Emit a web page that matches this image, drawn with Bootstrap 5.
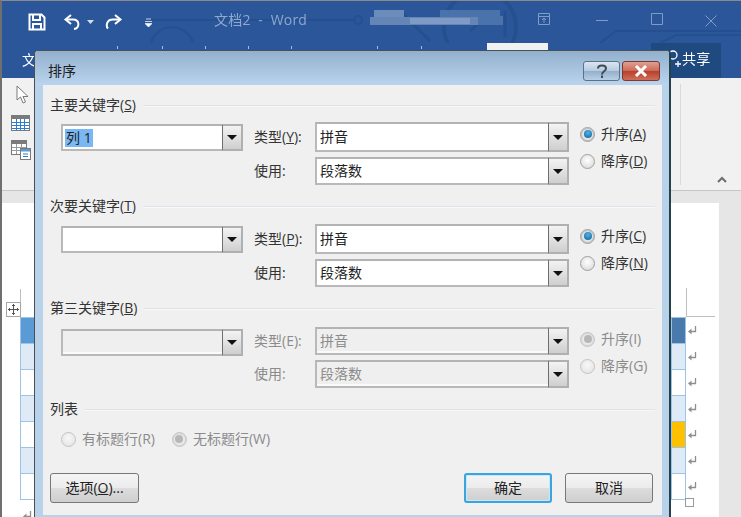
<!DOCTYPE html>
<html lang="zh-CN">
<head>
<meta charset="utf-8">
<title>排序</title>
<link href="https://cdn.jsdelivr.net/npm/bootstrap@5.3.0/dist/css/bootstrap.min.css" rel="stylesheet">
<style>
html,body{margin:0;width:741px;height:517px;overflow:hidden;background:#e6e6e6}
body{font-family:"Open Sans","Noto Sans CJK SC",sans-serif;font-size:14px;line-height:18px;color:#333}
.word-win{width:741px;height:517px;overflow:hidden;filter:blur(.35px);border-top:1px solid #8a8a8a;border-left:2px solid #6f6f6f}
.title-strip{height:42px;background:#2b579a;margin-left:-2px;color:#8ea8d0;position:relative}
.qat-item{position:absolute;top:12px;color:#fff}
.doc-name{position:absolute;left:214px;top:10px;font-size:14px;letter-spacing:.2px;white-space:pre}
.mosaic{position:absolute;left:370px;top:7px}
.win-ctrl{position:absolute;top:12px}
.circuit{position:absolute;left:0;top:0}
.tab-strip{height:35px;background:#2b579a;margin-left:-2px;color:#fff;position:relative}
.tab-letter{position:absolute;left:22px;top:8px}
.tab-active{position:absolute;left:487px;top:0;width:61px;height:8px;background:#f1f1f1}
.share-box{position:absolute;left:651px;top:0;width:70px;height:35px;background:#1f4a80;font-size:14px;padding:7px 0 0 31px;letter-spacing:.3px}
.share-icon{position:absolute;left:18px;top:6px}
.tick{position:absolute;top:3px;width:1px;height:3px;background:#a9bcda}
.ribbon-band{height:113px;background:#f1f1f1;border-bottom:1px solid #c6c6c6;position:relative}
.rb-icon{position:absolute;left:9px}
.rb-sep{position:absolute;left:678px;top:6px;width:1px;height:101px;background:#d9d9d9}
.rb-chev{position:absolute;left:715px;top:98px}
.doc-zone{height:326px;background:#e6e6e6;padding-top:12px}
.doc-page{width:717px;height:320px;background:#fff;position:relative;padding:114px 0 0 18px}
.mv-handle{position:absolute;left:4px;top:99px;width:15px;height:15px;border:1px solid #a6a6a6;background:#fff;display:flex;align-items:center;justify-content:center}
.crop-a{position:absolute;left:18px;top:86px;width:1px;height:28px;background:#bfbfbf}
.crop-b{position:absolute;left:684px;top:85px;width:29px;height:29px;border-left:1px solid #bfbfbf;border-bottom:1px solid #bfbfbf}
.tb-sheet{border-collapse:collapse;table-layout:fixed;width:677px}
.tb-sheet td{padding:0;height:26px;border:1px solid #9dc3e6}
.tb-sheet td:first-child{width:651px}
.tb-sheet td:nth-child(2){width:14px}
.tb-sheet td.para-cell{border:0;width:12px;padding-left:1px;vertical-align:middle;line-height:0}
.tone-head{background:#5b9bd5}.tone-head2{background:#4a7aac}
.tone-soft{background:#deeaf6}.tone-warn{background:#ffc000}
.tail-mark{position:absolute;left:20px;top:307px;line-height:0}
.tail-box{position:absolute;left:683px;top:295px;width:9px;height:9px;border:1px solid #9a9a9a}

.sort-dialog{position:absolute;left:32px;top:49px;width:637px;height:480px;background:#b8d2ea;border:1px solid #4a4f55;border-right:2px solid #24414c;border-radius:4px 4px 0 0;padding:0 7px 0 8px}
.dlg-top{height:34px;margin:0 -7px 0 -8px;padding:11px 0 0 13px;background:linear-gradient(#92b0cd,#bad4ee);border-radius:3px 3px 0 0;position:relative;color:#1c1c1c}
.cap-btn{position:absolute;top:10px;height:20px;border-radius:3px;border:1px solid #5f7186;display:flex;align-items:center;justify-content:center}
.cap-help{left:548px;width:37px;background:linear-gradient(#dbe6f1 0,#b7cbe0 48%,#96b0cc 52%,#b7cfe6 100%)}
.cap-close{left:587px;width:38px;border-color:#7c3a30;background:linear-gradient(#dfa093 0,#cf6a58 48%,#b8402c 52%,#cf6f5b 100%)}
.dlg-client{height:430px;background:#f0f0f0;padding:11px 7px 0 7px}
.kw-head{height:18px;display:flex;align-items:center;gap:7px;white-space:nowrap}
.kw-rule{flex-grow:1;height:1px;background:#dce3ea;box-shadow:0 1px 0 #f8f8f8}
.kw-row{display:flex;margin-bottom:12px}
.top-8{margin-top:8px}.top-9{margin-top:9px}.top-10{margin-top:10px}
.key-col{margin-left:11px;width:182px;padding-top:2px}
.field-col{margin-left:11px;width:315px}
.field-line{display:flex;align-items:center}
.field-line+.field-line{margin-top:5px}
.field-name{width:61px;white-space:nowrap}
.combo-box{position:relative;border:2px solid #b9b9b9;border-top-color:#b3b3b3;background:#fff;display:flex;align-items:center;padding-left:3px;color:#222}
.key-col .combo-box{height:27px;width:182px}
.wide-a{width:254px;height:30px}
.wide-b{width:254px;height:28px}
.combo-off{background:#efefef;color:#8b8b8b;box-shadow:inset 0 -2px 0 #fafafa}
.drop-btn{position:absolute;right:-2px;top:-2px;bottom:-2px;width:21px;border:2px solid #b0b0b0;border-left:1px solid #6e6e6e;background:linear-gradient(#f3f3f3,#cfcfcf);display:flex;align-items:center;justify-content:center}
.drop-btn::after{content:"";border-left:5px solid transparent;border-right:5px solid transparent;border-top:5px solid #111}
.sel-text{background:#7ab8f5;padding:0 1px;margin-left:-1px;line-height:18px}
.order-col{margin-left:11px;display:flex;flex-direction:column;gap:9px;padding-top:3px}
.order-item{display:flex;align-items:center;gap:6px;height:18px;white-space:nowrap}
.dot-radio{width:15px;height:15px;flex:none;border-radius:50%;border:1px solid #a0a0a0;background:radial-gradient(circle at 50% 40%,#fff,#d4d4d4);display:flex;align-items:center;justify-content:center}
.dot-on{background:#e4e4e4;box-shadow:inset 0 0 0 1px #bdbdbd}
.dot-on::after{content:"";width:8px;height:8px;border-radius:50%;background:radial-gradient(circle at 50% 35%,#4fb4e8,#0a5f98)}
.dot-gray{opacity:.55}
.dot-gray.dot-on::after{background:#8a8a8a}
.muted-tx{color:#8b8b8b}
.list-row{display:flex;margin:13px 0 0 11px;gap:0;height:16px;align-items:center}
.list-item{display:flex;align-items:center;gap:6px;white-space:nowrap}
.list-item+.list-item{margin-left:17px}
.foot-row{display:flex;margin-top:26px;padding-right:2px;align-items:center;gap:13px}
.dlg-btn{height:30px;padding:0;border:1px solid #777;border-radius:3px;background:linear-gradient(#f4f4f4 0,#ececec 48%,#dcdcdc 52%,#cfcfcf 100%);color:#222;font-size:14px;line-height:18px;--bs-btn-hover-bg:#e5e5e5}
.w-89{width:89px}.w-88{width:88px}
.dlg-default{border:2px solid #3aa5dc;box-shadow:inset 0 0 0 1px #c6e8f8}
</style>
</head>
<body>
<svg width="0" height="0" class="position-absolute"><defs>
<symbol id="pm" viewBox="0 0 10 11"><path d="M8.500 1v5.500H3" fill="none" stroke="#8f8f8f" stroke-width="1.3"/><path d="M4.500 3.500L1 6.500l3.500 3z" fill="#8f8f8f"/></symbol>
</defs></svg>
<div class="word-win position-relative">
  <header class="title-strip">
    <svg class="circuit" width="741" height="42" fill="none" stroke="#25508f" stroke-width="2">
      <path d="M150 19H355M480 19H505M600 42l16-12H741M660 42l16-8h65"/>
      <circle cx="358" cy="19" r="4"/><circle cx="172" cy="48" r="22"/><circle cx="480" cy="26" r="36" stroke-width="4"/>
      <path d="M470 30l18-16M505 10v26M400 10l30 30" stroke-width="3"/>
    </svg>
    <svg class="qat-item" style="left:28px" width="18" height="18" viewBox="0 0 18 18" fill="none" stroke="#fff" stroke-width="2"><path d="M1.500 1.500h12l3 3v12h-15z"/><path d="M5 2v5h7V2M5 16v-5h8v5"/></svg>
    <svg class="qat-item" style="left:63px" width="18" height="18" viewBox="0 0 18 18" fill="none" stroke="#fff" stroke-width="2"><path d="M8 2L2.500 6.500 8 11"/><path d="M3 6.500h7c7 0 7 9 1 9.500"/></svg>
    <svg class="qat-item" style="left:87px;top:19px" width="7" height="4"><path d="M0 0h7L3.500 4z" fill="#d5deec"/></svg>
    <svg class="qat-item" style="left:105px" width="18" height="18" viewBox="0 0 18 18" fill="none" stroke="#fff" stroke-width="2"><path d="M10 2l5.500 4.500L10 11"/><path d="M15 6.500H8c-7 0-7 7-5 9"/></svg>
    <svg class="qat-item" style="left:145px;top:17px" width="7" height="9"><path d="M1 1h5M0 3.500h7M0 5.500h7L3.500 9z" fill="#fff" stroke="#e6ecf5" stroke-width=".8"/></svg>
    <div class="doc-name">文档2  -  Word</div>
    <svg class="mosaic" width="135" height="19"><rect x="4" y="2" width="30" height="7" fill="#6c8cbb"/><rect x="0" y="9" width="128" height="8" fill="#6485b6"/><rect x="40" y="10" width="60" height="6" fill="#7f9ac4"/><rect x="70" y="2" width="60" height="7" fill="#4a72ab"/><rect x="108" y="8" width="25" height="9" fill="#4a72ab"/></svg>
    <svg class="win-ctrl" style="left:538px" width="12" height="13" fill="none" stroke="#7f9bc6"><path d="M.5 .5h11v11H.5zM.5 3.500h11M6 10V5M4 7l2-2 2 2"/></svg>
    <svg class="win-ctrl" style="left:596px" width="12" height="13"><path d="M0 7.500h12" stroke="#7f9bc6"/></svg>
    <svg class="win-ctrl" style="left:651px" width="12" height="13" fill="none" stroke="#7f9bc6"><path d="M.5 .5h11v11H.5z"/></svg>
    <svg class="win-ctrl" style="left:705px;top:14px" width="12" height="12" fill="none" stroke="#7f9bc6"><path d="M.5 .5l11 11M11.500 .5l-11 11"/></svg>
  </header>
  <nav class="tab-strip">
    <span class="tab-letter">文</span>
    <span class="tick" style="left:117px"></span><span class="tick" style="left:162px"></span><span class="tick" style="left:205px"></span><span class="tick" style="left:248px"></span><span class="tick" style="left:291px"></span><span class="tick" style="left:377px"></span><span class="tick" style="left:421px"></span>
    <span class="tab-active"></span>
    <div class="share-box">
      <svg class="share-icon" width="12" height="20" fill="none" stroke="#fff" stroke-width="1.3"><circle cx="4" cy="6" r="4"/><path d="M6 15h6M9 12v6"/></svg>
      共享
    </div>
  </nav>
  <section class="ribbon-band">
    <svg class="rb-icon" style="top:7px;left:12px" width="16" height="20" fill="#fff" stroke="#7a7a7a"><path d="M3 1v14l3.500-3 2.500 6 2.500-1-2.500-5.500h5z"/></svg>
    <svg class="rb-icon" style="top:37px" width="19" height="16"><rect x=".5" y=".5" width="18" height="15" fill="#fff" stroke="#7a7a7a"/><rect x="1" y="1" width="17" height="3" fill="#7a7a7a"/><path d="M1 7.500h17M1 10.500h17M1 13.500h17M5.500 4v11M9.500 4v11M13.500 4v11" stroke="#2b7cd3"/></svg>
    <svg class="rb-icon" style="top:62px" width="20" height="20"><rect x=".5" y=".5" width="15" height="14" fill="#fff" stroke="#7a7a7a"/><rect x="1" y="1" width="14" height="3" fill="#7a7a7a"/><path d="M1 7.500h14M1 10.500h14M5.500 4v10M10.500 4v10" stroke="#9a9a9a"/><rect x="9.500" y="8.500" width="10" height="11" fill="#fff" stroke="#7a7a7a"/><rect x="10" y="9" width="9" height="2.500" fill="#5b9bd5"/><path d="M12 14h5M12 16.500h5" stroke="#2b7cd3"/></svg>
    <span class="rb-sep"></span>
    <svg class="rb-chev" width="10" height="7" fill="none" stroke="#6d6d6d" stroke-width="2"><path d="M1 6l4-4 4 4"/></svg>
  </section>
  <main class="doc-zone">
    <div class="doc-page">
      <span class="crop-a"></span><span class="crop-b"></span>
      <span class="mv-handle"><svg width="11" height="11" fill="none" stroke="#555"><path d="M5.500 0v11M0 5.500h11M4 1.500h3M4 9.500h3M1.500 4v3M9.500 4v3"/></svg></span>
      <table class="tb-sheet">
        <tr><td class="tone-head"></td><td class="tone-head2"></td><td class="para-cell"><svg width="10" height="11"><use href="#pm"/></svg></td></tr>
        <tr><td class="tone-soft"></td><td class="tone-soft"></td><td class="para-cell"><svg width="10" height="11"><use href="#pm"/></svg></td></tr>
        <tr><td></td><td></td><td class="para-cell"><svg width="10" height="11"><use href="#pm"/></svg></td></tr>
        <tr><td class="tone-soft"></td><td class="tone-soft"></td><td class="para-cell"><svg width="10" height="11"><use href="#pm"/></svg></td></tr>
        <tr><td></td><td class="tone-warn"></td><td class="para-cell"><svg width="10" height="11"><use href="#pm"/></svg></td></tr>
        <tr><td class="tone-soft"></td><td class="tone-soft"></td><td class="para-cell"><svg width="10" height="11"><use href="#pm"/></svg></td></tr>
        <tr><td></td><td></td><td class="para-cell"><svg width="10" height="11"><use href="#pm"/></svg></td></tr>
      </table>
      <span class="tail-mark"><svg width="10" height="11"><use href="#pm"/></svg></span>
      <span class="tail-box"></span>
    </div>
  </main>

  <div class="sort-dialog" role="dialog">
    <div class="dlg-top">排序
      <span class="cap-btn cap-help"><svg width="12" height="14" fill="none" stroke="#3f4a55" stroke-width="2"><path d="M2 4.500C2 .5 10 .5 10 4.500c0 3-4 2.500-4 6"/><path d="M6 11.500v2.500" stroke="#3f4a55"/></svg></span>
      <span class="cap-btn cap-close"><svg width="14" height="12" fill="none" stroke="#fff" stroke-width="3"><path d="M2 1l10 10M12 1L2 11"/></svg></span>
    </div>
    <div class="dlg-client">
      <div class="kw-head"><span>主要关键字(<u>S</u>)</span><span class="kw-rule"></span></div>
      <div class="kw-row top-8">
        <div class="key-col"><div class="combo-box"><span class="sel-text">列 1</span><span class="drop-btn"></span></div></div>
        <div class="field-col">
          <div class="field-line"><span class="field-name">类型(<u>Y</u>):</span><div class="combo-box wide-a">拼音<span class="drop-btn"></span></div></div>
          <div class="field-line"><span class="field-name">使用:</span><div class="combo-box wide-b">段落数<span class="drop-btn"></span></div></div>
        </div>
        <div class="order-col">
          <div class="order-item"><span class="dot-radio dot-on"></span><span>升序(<u>A</u>)</span></div>
          <div class="order-item"><span class="dot-radio"></span><span>降序(<u>D</u>)</span></div>
        </div>
      </div>
      <div class="kw-head"><span>次要关键字(<u>T</u>)</span><span class="kw-rule"></span></div>
      <div class="kw-row top-9">
        <div class="key-col"><div class="combo-box"><span class="drop-btn"></span></div></div>
        <div class="field-col">
          <div class="field-line"><span class="field-name">类型(<u>P</u>):</span><div class="combo-box wide-a">拼音<span class="drop-btn"></span></div></div>
          <div class="field-line"><span class="field-name">使用:</span><div class="combo-box wide-b">段落数<span class="drop-btn"></span></div></div>
        </div>
        <div class="order-col">
          <div class="order-item"><span class="dot-radio dot-on"></span><span>升序(<u>C</u>)</span></div>
          <div class="order-item"><span class="dot-radio"></span><span>降序(<u>N</u>)</span></div>
        </div>
      </div>
      <div class="kw-head"><span>第三关键字(<u>B</u>)</span><span class="kw-rule"></span></div>
      <div class="kw-row top-10">
        <div class="key-col"><div class="combo-box combo-off"><span class="drop-btn"></span></div></div>
        <div class="field-col">
          <div class="field-line"><span class="field-name muted-tx">类型(E):</span><div class="combo-box wide-b combo-off">拼音<span class="drop-btn"></span></div></div>
          <div class="field-line"><span class="field-name muted-tx">使用:</span><div class="combo-box wide-b combo-off">段落数<span class="drop-btn"></span></div></div>
        </div>
        <div class="order-col muted-tx">
          <div class="order-item"><span class="dot-radio dot-on dot-gray"></span><span>升序(I)</span></div>
          <div class="order-item"><span class="dot-radio dot-gray"></span><span>降序(G)</span></div>
        </div>
      </div>
      <div class="kw-head"><span>列表</span><span class="kw-rule"></span></div>
      <div class="list-row muted-tx">
        <div class="list-item"><span class="dot-radio dot-gray"></span><span>有标题行(R)</span></div>
        <div class="list-item"><span class="dot-radio dot-on dot-gray"></span><span>无标题行(W)</span></div>
      </div>
      <div class="foot-row">
        <button type="button" class="btn dlg-btn w-89 me-auto">选项(<u>O</u>)...</button>
        <button type="button" class="btn dlg-btn dlg-default w-88">确定</button>
        <button type="button" class="btn dlg-btn w-88">取消</button>
      </div>
    </div>
  </div>
</div>
<script src="https://cdn.jsdelivr.net/npm/bootstrap@5.3.0/dist/js/bootstrap.bundle.min.js"></script>
</body>
</html>
